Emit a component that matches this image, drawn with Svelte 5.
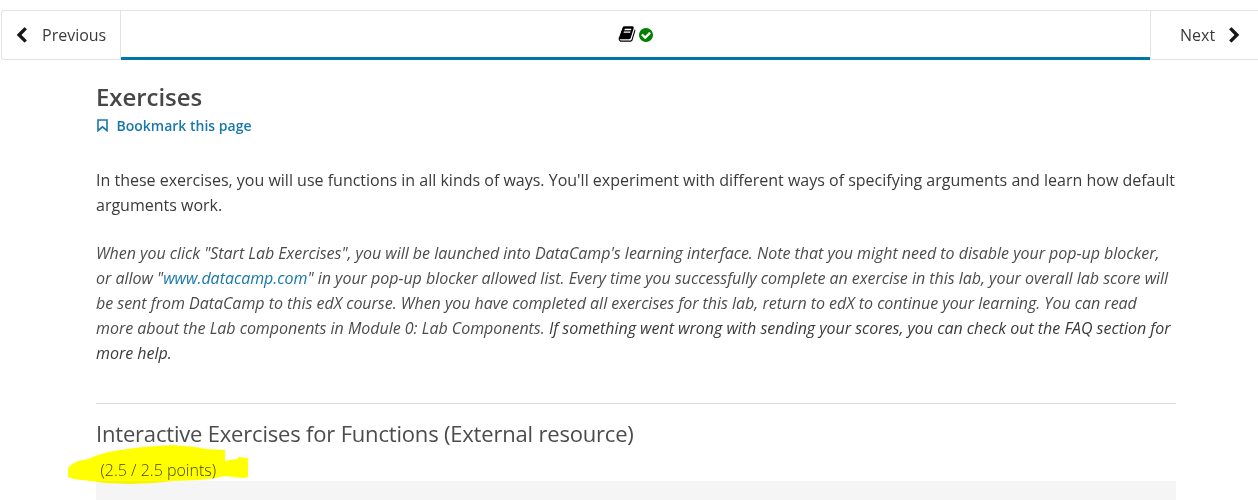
<script>
  const introLines = [
    "In these exercises, you will use functions in all kinds of ways. You'll experiment with different ways of specifying arguments and learn how default",
    'arguments work.'
  ];
</script>

<nav class="sequence">
  <button class="prev">
    <svg class="chevron" viewBox="0 0 1792 1792"><path d="M1427 301l-531 531 531 531q19 19 19 45t-19 45l-166 166q-19 19-45 19t-45-19l-742-742q-19-19-19-45t19-45l742-742q19-19 45-19t45 19l166 166q19 19 19 45t-19 45z" /></svg>
    <span>Previous</span>
  </button>
  <button class="tab" aria-label="Exercises">
    <svg class="book" viewBox="0 0 1792 1792"><path d="M1703 478q40 57 18 129l-275 906q-19 64-76.5 107.5t-122.5 43.5h-923q-77 0-148.5-53.5t-99.5-131.5q-24-67-2-127 0-4 3-27t4-37q1-8-3-21.5t-3-19.5q2-11 8-21t16.500-23.500 16.500-23.500q23-38 45-91.500t30-91.500q3-10 .5-30t-.5-28q3-11 17-28t17-23q21-36 42-92t25-90q1-9-2.500-32t.5-28q4-13 22-30.500t22-22.500q19-26 42.500-84.500t27.500-96.500q1-8-3-25.500t-2-26.500q2-8 9-18t18-23 17-21q8-12 16.500-30.500t15-35 16-36 19.500-32 26.500-23.500 36-11.500 47.500 5.500l-1 3q38-9 51-9h761q74 0 114 56t18 130l-274 906q-36 119-71.500 153.500t-128.500 34.500h-869q-27 0-38 15-11 16-1 43 24 70 144 70h923q29 0 56-15.500t35-41.500l300-987q7-22 5-57 38 15 59 43zm-1064 2q-4 13 2 22.500t20 9.500h608q13 0 25.500-9.500t16.500-22.500l21-64q4-13-2-22.500t-20-9.500h-608q-13 0-25.500 9.500t-16.500 22.500zm-83 256q-4 13 2 22.500t20 9.500h608q13 0 25.500-9.500t16.500-22.500l21-64q4-13-2-22.500t-20-9.500h-608q-13 0-25.500 9.500t-16.500 22.500z" /></svg>
    <svg class="check" viewBox="128 128 1536 1536"><path d="M1412 734q0-28-18-46l-91-90q-19-19-45-19t-45 19l-408 407-226-226q-19-19-45-19t-45 19l-91 90q-18 18-18 46 0 27 18 45l362 362q19 19 45 19 27 0 46-19l543-543q18-18 18-45zm252 162q0 209-103 385.500t-279.500 279.500-385.500 103-385.500-103-279.500-279.500-103-385.500 103-385.500 279.500-279.500 385.500-103 385.500 103 279.500 279.500 103 385.500z" /></svg>
  </button>
  <button class="next">
    <span>Next</span>
    <svg class="chevron" viewBox="0 0 1792 1792"><path d="M1363 877l-742 742q-19 19-45 19t-45-19l-166-166q-19-19-19-45t19-45l531-531-531-531q-19-19-19-45t19-45l166-166q19-19 45-19t45 19l742 742q19 19 19 45t-19 45z" /></svg>
  </button>
</nav>

<main>
  <h1>Exercises</h1>
  <button class="bookmark">
    <svg viewBox="0 0 11 13"><path d="M1 1h9v10.700l-4.500-3.900-4.500 3.900z" /></svg>
    <span>Bookmark this page</span>
  </button>

  <p class="intro">{#each introLines as line}<span class="line">{line}</span>{/each}</p>

  <p class="note">
    <span class="line">When you click "Start Lab Exercises", you will be launched into DataCamp's learning interface. Note that you might need to disable your pop-up blocker,</span>
    <span class="line">or allow "<a href="#datacamp">www.datacamp.com</a>" in your pop-up blocker allowed list. Every time you successfully complete an exercise in this lab, your overall lab score will</span>
    <span class="line">be sent from DataCamp to this edX course. When you have completed all exercises for this lab, return to edX to continue your learning. You can read</span>
    <span class="line">more about the Lab components in Module 0: Lab Components. <span class="dark">If something went wrong with sending your scores, you can check out the FAQ section for</span></span>
    <span class="line dark">more help.</span>
  </p>

  <section>
    <h2>Interactive Exercises for Functions (External resource)</h2>
    <div class="score">
      <svg class="marker" viewBox="0 0 180 40"><path d="M0 23L4 19L10 16L20 14L30 10L40 7L52 5L75 2L105 0L127 2L138 4L157 5V16L161 15L170 14V12L180 13V32L176 33L165 32L157 31L147 33L132 35L105 36L85 38L62 39L38 38L22 36L6 34L0 32Z" /></svg>
      <span>(2.5 / 2.5 points)</span>
    </div>
    <div class="panel"></div>
  </section>
</main>

<style>
  :global(body) {
    margin: 0;
    background: #fff;
    overflow: hidden;
  }
  :global(#app) {
    font-family: 'Open Sans', sans-serif;
    font-size: 16px;
    color: #3a3a3a;
  }
  button {
    font: inherit;
    color: inherit;
    background: none;
    border: 0;
    padding: 0;
    margin: 0;
  }
  .sequence {
    box-sizing: border-box;
    display: flex;
    height: 50px;
    margin: 10px 0 0 1px;
    border: 1px solid #e3e3e3;
    border-right: 0;
    border-radius: 3px 0 0 3px;
  }
  .prev, .next {
    box-sizing: border-box;
    display: flex;
    align-items: center;
    flex: none;
  }
  .prev {
    width: 119px;
    padding-left: 11px;
    gap: 13px;
    border-right: 1px solid #e3e3e3;
  }
  .next {
    width: 108px;
    padding-left: 29px;
    gap: 11px;
    border-left: 1px solid #e3e3e3;
  }
  .chevron {
    width: 17px;
    height: 17px;
    fill: #171717;
  }
  .prev .chevron {
    margin-right: -1px;
  }
  .tab {
    flex: 1;
    display: flex;
    align-items: center;
    justify-content: center;
    gap: 3px;
    box-sizing: border-box;
    height: 49px;
    padding-right: 1px;
    border-bottom: 3px solid #0075a8;
  }
  .book {
    width: 18px;
    height: 18px;
    fill: #000;
  }
  .check {
    width: 14px;
    height: 14px;
    fill: #008100;
    margin-top: 2px;
  }
  main {
    width: 1080px;
    margin-left: 96px;
  }
  h1 {
    margin: 0;
    padding-top: 20px;
    font-size: 24px;
    line-height: 34px;
    font-weight: 600;
    letter-spacing: -0.05px;
    color: #474747;
  }
  .bookmark {
    display: flex;
    align-items: center;
    gap: 8.5px;
    height: 20px;
    margin-top: 1px;
    padding-left: 1px;
    font-size: 14px;
    font-weight: 600;
    color: #1878aa;
  }
  .bookmark svg {
    width: 11px;
    height: 13px;
    fill: none;
    stroke: #1878aa;
    stroke-width: 1.6;
  }
  p {
    margin: 0;
    line-height: 25px;
  }
  .line {
    display: block;
    white-space: nowrap;
  }
  .intro {
    margin-top: 33px;
  }
  .note {
    margin-top: 23px;
    font-style: italic;
    letter-spacing: -0.022px;
    color: #4c4c4c;
  }
  .dark {
    color: #3a3a3a;
  }
  a {
    color: #1878aa;
    text-decoration: none;
  }
  section {
    margin-top: 37px;
    border-top: 1px solid #d9d9d9;
  }
  h2 {
    margin: 0;
    padding-top: 13px;
    font-size: 22px;
    line-height: 32px;
    font-weight: 400;
    letter-spacing: -0.19px;
    color: #4c4c4c;
  }
  .score {
    position: relative;
    height: 32px;
    padding-left: 4.5px;
    line-height: 43px;
    font-weight: 300;
    color: #474747;
  }
  .marker {
    position: absolute;
    left: -28px;
    top: -4px;
    z-index: 1;
    width: 180px;
    height: 40px;
    fill: #ff0;
    mix-blend-mode: multiply;
  }
  .panel {
    height: 19px;
    background: #f5f5f5;
  }
</style>
